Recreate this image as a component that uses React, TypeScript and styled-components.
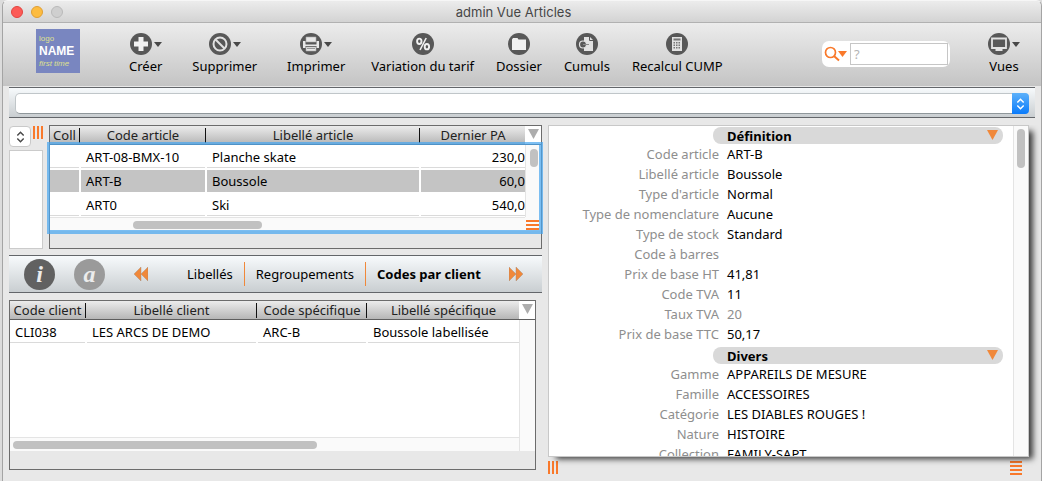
import React from "react";
import styled, { createGlobalStyle, css } from "styled-components";

const ORANGE = "#f9792b";
const AMBER = "#f0883a";

const Global = createGlobalStyle`
  * { box-sizing: border-box; }
  body {
    margin: 0;
    background: #dcdcdc;
    font-family: "Noto Sans", "Open Sans", sans-serif;
    font-size: 13px;
    line-height: 20px;
    color: #000;
  }
  button, input, select { font: inherit; color: inherit; }
  button { background: none; border: 0; padding: 0; margin: 0; }
`;

const Window = styled.div`
  display: flex;
  flex-direction: column;
  height: 100vh;
  min-height: 400px;
  border: 1px solid #a4a4a4;
  border-top-color: #f6f6f6;
  border-bottom: 0;
  border-radius: 6px 6px 0 0;
  margin: 0 0 0 2px;
  background: #e8e8e8;
  overflow: hidden;
`;

const TitleBar = styled.header`
  display: grid;
  grid-template-columns: 1fr auto 1fr;
  align-items: center;
  height: 22px;
  flex: none;
  padding: 0 25px 0 8px;
  background: linear-gradient(#ececec, #d3d3d3);
  border-bottom: 1px solid #b1b1b1;
`;

const Lights = styled.div`
  display: flex;
  gap: 8px;
`;

const Light = styled.button<{ $fill: string; $edge: string }>`
  width: 12px;
  height: 12px;
  border-radius: 50%;
  background: ${(p) => p.$fill};
  border: 1px solid ${(p) => p.$edge};
`;

const Title = styled.h1`
  margin: 0;
  font: 400 13px/20px Inter, sans-serif;
  color: #464646;
`;

const Toolbar = styled.nav`
  display: flex;
  align-items: flex-start;
  flex: none;
  height: 63px;
  padding: 6px 17px 0 33px;
  background: linear-gradient(#ececec, #c4c4c4);
`;

const Logo = styled.div`
  display: flex;
  flex-direction: column;
  flex: none;
  width: 44px;
  height: 44px;
  padding: 4px 3px 0;
  margin-right: 45px;
  background: #7986c0;
  color: #dfe08e;
  font: 8px/11px "Liberation Sans", sans-serif;
  white-space: nowrap;
`;

const LogoName = styled.strong`
  font-size: 12px;
  line-height: 14px;
  color: #fff;
`;

const Tools = styled.div`
  display: flex;
  gap: 22px;
`;

const Tool = styled.button<{ $menu?: boolean }>`
  display: flex;
  flex-direction: column;
  align-items: center;
  gap: 1px;
  padding: 4px ${(p) => (p.$menu ? 4 : 0)}px 0;
  white-space: nowrap;
`;

const ToolIcon = styled.span`
  display: flex;
  align-items: center;
  gap: 2px;
  height: 22px;
`;

const Search = styled.div`
  display: flex;
  align-items: center;
  gap: 3px;
  width: 128px;
  height: 26px;
  margin: 12px 34px 0 auto;
  padding: 2px;
  background: #fff;
  border-radius: 7px;
`;

const SearchMenu = styled.button`
  display: flex;
  flex: none;
`;

const SearchInput = styled.input`
  flex: 1;
  min-width: 0;
  height: 22px;
  padding: 0 3px;
  border: 1px solid #c6c6c6;
  background: #fff;
  &::placeholder { color: #b4b4b4; opacity: 1; }
`;

const Band = css`
  background: linear-gradient(#f7fafc, #c9ced1);
  border-top: 1px solid #63666a;
  border-bottom: 1px solid #63666a;
`;

const QueryBar = styled.div`
  ${Band}
  flex: none;
  height: 31px;
  margin: 1px 6px 0;
  padding: 5px 6px;
`;

const QueryField = styled.div`
  display: flex;
  height: 21px;
  border: 1px solid #c0c6c9;
  border-bottom-color: #8f979b;
  border-radius: 5px;
  background: #fff;
  position: relative;
`;

const QuerySelect = styled.select`
  appearance: none;
  flex: 1;
  border: 0;
  background: transparent;
  padding: 0 24px 0 6px;
`;

const Stepper = styled.span`
  position: absolute;
  top: -1px;
  right: -1px;
  display: flex;
  align-items: center;
  justify-content: center;
  width: 17px;
  height: 21px;
  border-radius: 0 4px 4px 0;
  background: linear-gradient(#5db1fa, #0a7bfb);
  pointer-events: none;
`;

const Main = styled.main`
  display: grid;
  grid-template-columns: minmax(0, 533fr) minmax(0, 481fr);
  grid-template-rows: minmax(0, 1fr);
  gap: 6px;
  flex: 1;
  min-height: 0;
  padding: 7px 12px 0 6px;
`;

const LeftPane = styled.div`
  display: flex;
  flex-direction: column;
  min-height: 0;
  padding-bottom: 11px;
`;

const ListArea = styled.div`
  display: flex;
  gap: 6px;
  flex: none;
  height: 124px;
`;

const Side = styled.div`
  display: flex;
  flex-direction: column;
  gap: 3px;
  flex: none;
  width: 34px;
  padding-top: 1px;
`;

const SideTop = styled.div`
  display: flex;
  justify-content: space-between;
`;

const SmallStepper = styled.button`
  display: flex;
  align-items: center;
  justify-content: center;
  width: 22px;
  height: 21px;
  background: #fff;
  border: 1px solid #c9c9c9;
  border-radius: 4px;
`;

const SideBox = styled.div`
  flex: 1;
  background: #fff;
  border: 1px solid #cbcbcb;
`;

const Panel = styled.section<{ $fill?: boolean }>`
  display: flex;
  flex-direction: column;
  min-width: 0;
  min-height: 0;
  flex: 1;
  border: 1px solid #6c6c6c;
  margin-right: ${(p) => (p.$fill ? 6 : 0)}px;
  padding-bottom: ${(p) => (p.$fill ? 18 : 0)}px;
`;

const ScrollFrame = styled.div<{ $fill?: boolean }>`
  position: relative;
  display: grid;
  grid-template-columns: minmax(0, 1fr) 16px;
  grid-template-rows: 1fr 14px;
  flex: ${(p) => (p.$fill ? "1" : "none")};
  background: #fff;
`;

const FocusRing = styled.div`
  position: absolute;
  inset: 16px -2px -3px -3px;
  border: 3px solid rgba(74, 166, 238, 0.72);
  border-right-width: 4px;
  border-bottom-width: 4px;
  pointer-events: none;
`;

const Table = styled.table`
  width: 100%;
  table-layout: fixed;
  border-collapse: separate;
  border-spacing: 0;
  align-self: start;
`;

const Th = styled.th`
  height: 19px;
  padding: 2px 0 1px;
  font-weight: 400;
  line-height: 15px;
  color: #222;
  white-space: nowrap;
  background: linear-gradient(#ececec, #b6b6b6);
  border-bottom: 1px solid #5e5e5e;
`;

const ThLabel = styled.span`
  display: block;
  border-right: 1px solid #111;
  margin-right: 1px;
  ${Th}:last-child & {
    border-right: 0;
    margin-right: 0;
  }
`;

const Td = styled.td`
  height: 24px;
  padding: 1px 2px 1px 0;
  &:last-child { padding-right: 0; }
`;

const Cell = styled.div<{ $selected?: boolean; $num?: boolean }>`
  height: 22px;
  padding: 0 ${(p) => (p.$num ? 0 : 5)}px 0 5px;
  line-height: 22px;
  white-space: nowrap;
  overflow: hidden;
  text-align: ${(p) => (p.$num ? "right" : "left")};
  background: ${(p) => (p.$selected ? "#c4c4c4" : "#fff")};
  border-bottom: 1px solid ${(p) => (p.$selected ? "#c4c4c4" : "#dadada")};
`;

const Gutter = styled.div`
  grid-column: 2;
  grid-row: 1 / 3;
  display: flex;
  flex-direction: column;
`;

const GutterHead = styled.button`
  display: flex;
  justify-content: center;
  height: 19px;
  padding-top: 3px;
  background: #fff;
  border-bottom: 1px solid #5e5e5e;
`;

const Track = styled.div<{ $pad?: number }>`
  flex: 1;
  display: flex;
  flex-direction: column;
  align-items: center;
  padding-top: ${(p) => p.$pad ?? 4}px;
  background: #fafafa;
  border-left: 1px solid #e4e4e4;
`;

const VThumb = styled.div<{ $size: number }>`
  width: 8px;
  height: ${(p) => p.$size}px;
  border-radius: 4px;
  background: #c1c1c1;
`;

const HTrack = styled.div<{ $start: number }>`
  display: flex;
  align-items: center;
  padding: 0 0 0 ${(p) => p.$start}px;
  background: #fafafa;
  border-top: 1px solid #e4e4e4;
`;

const HThumb = styled.div<{ $size: number }>`
  width: ${(p) => p.$size}%;
  height: 8px;
  border-radius: 4px;
  background: #c1c1c1;
`;

const Corner = styled.div`
  flex: none;
  padding: 3px 0 0 1px;
  height: 14px;
  display: flex;
  background: #fafafa;
`;

const TabBar = styled.nav`
  ${Band}
  display: flex;
  align-items: center;
  flex: none;
  height: 38px;
  margin: 6px 0 7px;
  padding: 0 19px 0 15px;
`;

const Rounds = styled.div`
  display: flex;
  gap: 19px;
  margin-right: 29px;
`;

const Round = styled.button<{ $fill: string }>`
  width: 31px;
  height: 31px;
  border-radius: 50%;
  background: ${(p) => p.$fill};
  color: #ececec;
  font: italic 700 24px/28px "Liberation Serif", serif;
`;

const Skip = styled.button`
  display: flex;
`;

const Tabs = styled.div`
  display: flex;
  align-items: center;
  margin: 0 auto 0 28px;
`;

const Tab = styled.button<{ $active?: boolean }>`
  height: 24px;
  padding: 0 11px;
  white-space: nowrap;
  font-weight: ${(p) => (p.$active ? 700 : 400)};
  & + & { border-left: 1px solid ${AMBER}; }
`;

const RightPane = styled.div`
  display: flex;
  flex-direction: column;
  min-height: 0;
`;

const Card = styled.section`
  display: grid;
  grid-template-columns: minmax(0, 1fr) 15px;
  grid-template-rows: minmax(0, 1fr);
  flex: 1;
  min-height: 0;
  background: #fff;
  border: 1px solid #c8c8c8;
  box-shadow: 6px 4px 6px -2px rgba(0, 0, 0, 0.75);
  clip-path: inset(0 -14px -14px 0);
`;

const Details = styled.div`
  display: flex;
  flex-direction: column;
  gap: 3px;
  padding: 1px 10px 0 0;
  overflow: hidden;
`;

const SectionTitle = styled.h2`
  display: flex;
  justify-content: space-between;
  margin: 0 0 0 164px;
  height: 17px;
  padding: 0 5px 0 14px;
  border-radius: 8px;
  background: #d9d9d9;
  font-size: 13px;
  font-weight: 700;
  line-height: 18px;
`;

const Toggle = styled.button`
  display: flex;
  padding-top: 3px;
`;

const Fields = styled.dl`
  display: grid;
  grid-template-columns: 170px minmax(0, 1fr);
  grid-auto-rows: 20px;
  column-gap: 8px;
  margin: 0;
  white-space: nowrap;
`;

const Label = styled.dt`
  text-align: right;
  color: #8e8e8e;
`;

const Value = styled.dd<{ $muted?: boolean }>`
  margin: 0;
  color: ${(p) => (p.$muted ? "#8e8e8e" : "#000")};
`;

const Handles = styled.div`
  display: flex;
  justify-content: space-between;
  flex: none;
  height: 24px;
  padding: 4px 7px 0 0;
`;

const Disc = ({ children }: { children: React.ReactNode }) => (
  <svg width="22" height="22" viewBox="0 0 22 22" aria-hidden="true">
    <circle cx="11" cy="11" r="11" fill="#585858" />
    {children}
  </svg>
);

const Caret = () => (
  <svg width="8" height="6" viewBox="0 0 8 6" aria-hidden="true">
    <path d="M0 1h8L4 6z" fill="#484848" />
  </svg>
);

const Triangle = ({ color }: { color: string }) => (
  <svg width="11" height="10" viewBox="0 0 11 10" aria-hidden="true">
    <path d="M0 0h11L5.500 10z" fill={color} />
  </svg>
);

const Chevrons = ({ color }: { color: string }) => (
  <svg width="9" height="12" viewBox="0 0 9 12" fill="none" stroke={color} strokeWidth="1.500" aria-hidden="true">
    <path d="M1.300 4.500 4.500 1.300 7.700 4.500M1.300 7.500 4.500 10.700 7.700 7.500" />
  </svg>
);

const Arrows = ({ back }: { back?: boolean }) => (
  <svg width="14" height="14" viewBox="0 0 14 14" fill={AMBER} stroke="#9d8574" strokeWidth=".4" aria-hidden="true">
    <path d={back ? "M7 0v14L0 7zM14 0v14L7 7z" : "M0 0v14L7 7zM7 0v14L14 7z"} />
  </svg>
);

const VBars = () => (
  <svg width="10" height="13" viewBox="0 0 10 13" fill={ORANGE} aria-hidden="true">
    <path d="M0 0h2v13H0zM4 0h2v13H4zM8 0h2v13H8z" />
  </svg>
);

const HBars = ({ count, width }: { count: number; width: number }) => (
  <svg width={width} height={count * 4 - 2} fill={ORANGE} aria-hidden="true">
    {Array.from({ length: count }, (_, i) => (
      <rect key={i} y={i * 4} width={width} height="2" />
    ))}
  </svg>
);

const icons: Record<string, React.ReactNode> = {
  plus: <path d="M8.500 4h5v4.500H18v5h-4.500V18h-5v-4.500H4v-5h4.500z" fill="#f2f2f2" />,
  ban: (
    <g fill="none" stroke="#e2e2e2" strokeWidth="2">
      <circle cx="11" cy="11" r="6.500" />
      <path d="M6.500 6.500l9 9" />
    </g>
  ),
  print: (
    <g>
      <path d="M6 4h10v5H6zM6 14h10v4H6z" fill="#e8e8e8" stroke="#aaa" strokeWidth=".6" />
      <path d="M3 8h2.500v3.500h11V8H19v7h-2.500v-2h-11v2H3z" fill="#e8e8e8" />
      <path d="M7 15.500h8" stroke="#999" />
    </g>
  ),
  percent: (
    <g fill="none" stroke="#f2f2f2" strokeWidth="1.900">
      <ellipse cx="7.300" cy="8.300" rx="2.200" ry="2.700" />
      <ellipse cx="14.900" cy="13.700" rx="2.200" ry="2.700" />
      <path d="M14.200 5 8 17" strokeWidth="1.600" />
    </g>
  ),
  folder: <path d="M4 6.500 5 5h4.500l1 1.500H18V17H4z" fill="#f0f0f0" />,
  page: (
    <g>
      <path d="M8 4h6l3 3v11H8z" fill="#e2e2e2" />
      <path d="M13.500 4v3.500H17" fill="none" stroke="#585858" />
      <circle cx="7" cy="11.500" r="3.500" fill="#585858" stroke="#e2e2e2" strokeWidth="1.200" />
      <path d="M7 11.500h6" stroke="#8b8b8b" strokeWidth="1.200" />
    </g>
  ),
  calc: (
    <g>
      <path d="M6 4h10v14H6z" fill="#e2e2e2" />
      <path d="M7.500 5.500h7v2h-7z" fill="#777" />
      <path d="M7.500 9.800h7.500M7.500 12.300h7.500M7.500 14.800h7.500" stroke="#777" strokeWidth="1.400" strokeDasharray="1.500 1" />
    </g>
  ),
  screen: (
    <g>
      <path d="M4 5.500h14v9.500H4z" fill="none" stroke="#e2e2e2" strokeWidth="1.800" />
      <path d="M7.500 15.500h7v2.500h-7z" fill="#e2e2e2" />
    </g>
  ),
};

const tools = [
  { label: "Créer", icon: "plus", menu: true },
  { label: "Supprimer", icon: "ban", menu: true },
  { label: "Imprimer", icon: "print", menu: true },
  { label: "Variation du tarif", icon: "percent" },
  { label: "Dossier", icon: "folder" },
  { label: "Cumuls", icon: "page" },
  { label: "Recalcul CUMP", icon: "calc" },
];

const ToolButton = ({ label, icon, menu }: { label: string; icon: string; menu?: boolean }) => (
  <Tool type="button" $menu={menu}>
    <ToolIcon>
      <Disc>{icons[icon]}</Disc>
      {menu && <Caret />}
    </ToolIcon>
    {label}
  </Tool>
);

type GridProps = {
  widths: number[];
  heads: string[];
  rows: string[][];
  selected?: number;
  numeric?: number;
};

const DataTable = ({ widths, heads, rows, selected, numeric }: GridProps) => (
  <Table>
    <colgroup>
      {heads.map((h, i) => (
        <col key={h} width={widths[i]} />
      ))}
    </colgroup>
    <thead>
      <tr>
        {heads.map((h) => (
          <Th key={h} scope="col">
            <ThLabel>{h}</ThLabel>
          </Th>
        ))}
      </tr>
    </thead>
    <tbody>
      {rows.map((row, r) => (
        <tr key={r}>
          {row.map((v, c) => (
            <Td key={c}>
              <Cell $selected={r === selected} $num={c === numeric}>{v}</Cell>
            </Td>
          ))}
        </tr>
      ))}
    </tbody>
  </Table>
);

const sections: { title: string; fields: [string, string, boolean?][] }[] = [
  {
    title: "Définition",
    fields: [
      ["Code article", "ART-B"],
      ["Libellé article", "Boussole"],
      ["Type d'article", "Normal"],
      ["Type de nomenclature", "Aucune"],
      ["Type de stock", "Standard"],
      ["Code à barres", ""],
      ["Prix de base HT", "41,81"],
      ["Code TVA", "11"],
      ["Taux TVA", "20", true],
      ["Prix de base TTC", "50,17"],
    ],
  },
  {
    title: "Divers",
    fields: [
      ["Gamme", "APPAREILS DE MESURE"],
      ["Famille", "ACCESSOIRES"],
      ["Catégorie", "LES DIABLES ROUGES !"],
      ["Nature", "HISTOIRE"],
      ["Collection", "FAMILY-SAPT"],
    ],
  },
];

export default function App() {
  return (
    <>
      <Global />
      <Window>
        <TitleBar>
          <Lights>
            <Light type="button" aria-label="Fermer" $fill="#fc5b57" $edge="#e2443f" />
            <Light type="button" aria-label="Réduire" $fill="#fdbc40" $edge="#df9f34" />
            <Light type="button" aria-label="Agrandir" $fill="#cfcfcf" $edge="#b9b9b9" />
          </Lights>
          <Title>admin Vue Articles</Title>
        </TitleBar>

        <Toolbar>
          <Logo>
            <span>logo</span>
            <LogoName>NAME</LogoName>
            <em>first time</em>
          </Logo>
          <Tools>
            {tools.map((t) => (
              <ToolButton key={t.label} {...t} />
            ))}
          </Tools>
          <Search>
            <SearchMenu type="button" aria-label="Options de recherche">
              <svg width="23" height="18" viewBox="0 0 23 18" aria-hidden="true">
                <circle cx="6.500" cy="7.500" r="5" fill="none" stroke={ORANGE} strokeWidth="1.700" />
                <path d="M10 11l5 4.500" stroke={ORANGE} strokeWidth="2" />
                <path d="M14 6h9l-4.500 6z" fill={ORANGE} />
              </svg>
            </SearchMenu>
            <SearchInput type="text" placeholder="?" aria-label="Rechercher" />
          </Search>
          <ToolButton label="Vues" icon="screen" menu />
        </Toolbar>

        <QueryBar>
          <QueryField>
            <QuerySelect aria-label="Requête" defaultValue="">
              <option value="" />
            </QuerySelect>
            <Stepper>
              <Chevrons color="#fff" />
            </Stepper>
          </QueryField>
        </QueryBar>

        <Main>
          <LeftPane>
            <ListArea>
              <Side>
                <SideTop>
                  <SmallStepper type="button" aria-label="Choisir">
                    <Chevrons color="#4a4a4a" />
                  </SmallStepper>
                  <VBars />
                </SideTop>
                <SideBox />
              </Side>
              <Panel>
                <ScrollFrame>
                  <DataTable
                    widths={[31, 126, 214, 104]}
                    heads={["Coll", "Code article", "Libellé article", "Dernier PA"]}
                    rows={[
                      ["", "ART-08-BMX-10", "Planche skate", "230,0"],
                      ["", "ART-B", "Boussole", "60,0"],
                      ["", "ART0", "Ski", "540,0"],
                    ]}
                    selected={1}
                    numeric={3}
                  />
                  <Gutter>
                    <GutterHead type="button" aria-label="Colonnes">
                      <Triangle color="#adadad" />
                    </GutterHead>
                    <Track>
                      <VThumb $size={18} />
                    </Track>
                    <Corner>
                      <HBars count={3} width={13} />
                    </Corner>
                  </Gutter>
                  <HTrack $start={83}>
                    <HThumb $size={33} />
                  </HTrack>
                  <FocusRing />
                </ScrollFrame>
              </Panel>
            </ListArea>

            <TabBar>
              <Rounds>
                <Round type="button" $fill="#616161">i</Round>
                <Round type="button" $fill="#9a9a9a">a</Round>
              </Rounds>
              <Skip type="button" aria-label="Précédent"><Arrows back /></Skip>
              <Tabs>
                <Tab type="button">Libellés</Tab>
                <Tab type="button">Regroupements</Tab>
                <Tab type="button" $active>Codes par client</Tab>
              </Tabs>
              <Skip type="button" aria-label="Suivant"><Arrows /></Skip>
            </TabBar>

            <Panel $fill>
              <ScrollFrame $fill>
                <DataTable
                  widths={[77, 171, 110, 151]}
                  heads={["Code client", "Libellé client", "Code spécifique", "Libellé spécifique"]}
                  rows={[["CLI038", "LES ARCS DE DEMO", "ARC-B", "Boussole labellisée"]]}
                />
                <Gutter>
                  <GutterHead type="button" aria-label="Colonnes">
                    <Triangle color="#adadad" />
                  </GutterHead>
                  <Track />
                </Gutter>
                <HTrack $start={3}>
                  <HThumb $size={60} />
                </HTrack>
              </ScrollFrame>
            </Panel>
          </LeftPane>

          <RightPane>
            <Card>
              <Details>
                {sections.map((s) => (
                  <div key={s.title}>
                    <SectionTitle>
                      {s.title}
                      <Toggle type="button" aria-label={`Replier ${s.title}`}>
                        <Triangle color={AMBER} />
                      </Toggle>
                    </SectionTitle>
                    <Fields>
                      {s.fields.map(([label, value, muted]) => (
                        <React.Fragment key={label}>
                          <Label>{label}</Label>
                          <Value $muted={muted}>{value}</Value>
                        </React.Fragment>
                      ))}
                    </Fields>
                  </div>
                ))}
              </Details>
              <Track $pad={3}>
                <VThumb $size={39} />
              </Track>
            </Card>
            <Handles>
              <VBars />
              <HBars count={4} width={12} />
            </Handles>
          </RightPane>
        </Main>
      </Window>
    </>
  );
}
